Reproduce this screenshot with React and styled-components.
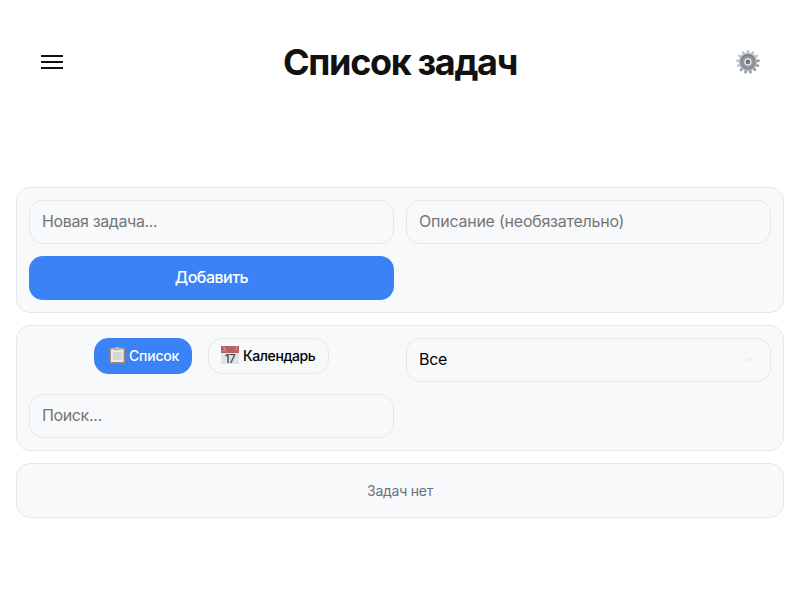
import React from "react";
import styled, { createGlobalStyle } from "styled-components";

const GlobalStyle = createGlobalStyle`
  * { box-sizing: border-box; }
  body {
    margin: 0;
    background: #fff;
    color: #111;
    font-family: Inter, "Liberation Sans", sans-serif;
    font-size: 16px;
    -webkit-font-smoothing: antialiased;
  }
`;

const Page = styled.main`
  min-height: 600px;
  padding: 0 16px;
`;

const Header = styled.header`
  display: grid;
  grid-template-columns: 48px 1fr 48px;
  align-items: center;
  height: 124px;
  padding: 0 12px;
  margin-bottom: 63px;
`;

const Title = styled.h1`
  margin: 0;
  text-align: center;
  font-size: 36px;
  line-height: 44px;
  font-weight: 700;
  letter-spacing: -1.35px;
`;

const IconButton = styled.button`
  display: flex;
  align-items: center;
  width: 48px;
  height: 48px;
  padding: 0 0 0 ${(p) => p.$inset};
  border: 0;
  background: none;
`;

const Stack = styled.div`
  display: flex;
  flex-direction: column;
  gap: 12px;
`;

const Panel = styled.section`
  border: 1px solid #e5e7eb;
  border-radius: 14px;
  background: #f8f9fb;
`;

const GridPanel = styled(Panel)`
  display: grid;
  grid-template-columns: 1fr 1fr;
  gap: 12px;
  padding: 12px;
`;

const Field = styled.input`
  width: 100%;
  height: 44px;
  padding: 0 12px 2px;
  border: 1px solid #e5e7eb;
  border-radius: 14px;
  background: #f8f9fb;
  color: #111;
  font: inherit;
  letter-spacing: ${(p) => p.$spacing || "-0.37px"};
  outline: none;
  &::placeholder { color: #757575; opacity: 1; }
`;

const AddButton = styled.button`
  height: 44px;
  padding: 0 0 2px;
  border: 0;
  border-radius: 14px;
  background: #3b82f6;
  color: #fff;
  font: inherit;
  font-weight: 500;
  letter-spacing: -0.5px;
`;

const Tabs = styled.div`
  display: flex;
  justify-content: center;
  align-items: flex-start;
  gap: 16px;
`;

const Tab = styled.button`
  display: flex;
  align-items: center;
  gap: 3px;
  width: ${(p) => p.$width};
  height: 36px;
  padding: 0 0 2px ${(p) => (p.$active ? "14px" : "12px")};
  border: 1px solid ${(p) => (p.$active ? "#3b82f6" : "#e5e7eb")};
  border-radius: 14px;
  background: ${(p) => (p.$active ? "#3b82f6" : "#f8f9fb")};
  color: ${(p) => (p.$active ? "#fff" : "#000")};
  font: inherit;
  font-size: 14px;
  font-weight: 500;
  letter-spacing: ${(p) => (p.$active ? "-0.2px" : "-0.4px")};
  white-space: nowrap;
  svg { flex: none; }
`;

const Select = styled.div`
  display: flex;
  align-items: center;
  justify-content: space-between;
  height: 44px;
  padding: 0 17px 2px 12px;
  border: 1px solid #e5e7eb;
  border-radius: 14px;
  color: #000;
  letter-spacing: -0.3px;
  svg { margin-top: 2px; }
`;

const Empty = styled(Panel)`
  display: flex;
  align-items: center;
  justify-content: center;
  height: 55px;
  color: #6b7280;
  font-size: 14px;
  letter-spacing: -0.25px;
`;

const MenuIcon = () => (
  <svg width="22" height="16" viewBox="0 0 22 16" fill="#111">
    <path d="M0 1h22v2H0zM0 7h22v2H0zM0 13h22v2H0z" />
  </svg>
);

const TEETH = Array.from({ length: 13 }, (_, i) => (i * 360) / 13);

const GearIcon = () => (
  <svg width="24" height="26" viewBox="0 -1 24 26">
    {TEETH.map((angle) => (
      <path
        key={angle}
        d="M10.6 4 10.9 .5Q12-.3 13.1 .5L13.4 4Z"
        fill={angle > 60 && angle < 230 ? "#8f969d" : "#b9c4cd"}
        transform={`rotate(${angle} 12 12)`}
      />
    ))}
    <circle cx="12" cy="12" r="9.2" fill="#b3bac1" />
    <circle cx="12" cy="12" r="7.8" fill="#8b9095" />
    <path d="M5 10.5a7.2 7.2 0 0 1 13.5-1.5" fill="none" stroke="#70767c" />
    <circle cx="12" cy="12" r="5.6" fill="#92989f" />
    <circle cx="12" cy="12" r="3.7" fill="#dfe5ea" />
    <circle cx="12" cy="12" r="2.2" fill="#555b62" />
    <circle cx="12.4" cy="12.5" r="1" fill="#a8afb5" />
  </svg>
);

const ClipboardIcon = () => (
  <svg width="17" height="18" viewBox="0 0 17 18">
    <rect x=".5" y="1.5" width="15.5" height="16" rx="1" fill="#a28b73" />
    <rect x="2" y="3" width="12.5" height="13" fill="#ececeb" />
    <path d="M3.8 6h9v8h-9z" fill="#d5d6d8" />
    <path d="M4 3.7V2h2.7Q8.3-.4 10 2h2.5v1.7z" fill="#b3bdc6" />
    <path d="M4 3.7h8.5" stroke="#87919b" strokeWidth=".6" />
  </svg>
);

const CalendarIcon = () => (
  <svg width="19" height="18" viewBox="0 0 19 18">
    <path d="M0 6h18v12H0z" fill="#e2e3e4" />
    <path d="M0 0h18v7H0z" fill="#b86164" />
    <path d="M2 5.5 4 2.5l1 3M15 2.5v2" stroke="#dfb0b2" strokeWidth=".8" fill="none" />
    <circle cx="3" cy="1" r=".6" fill="#eee" />
    <circle cx="15.5" cy="1" r=".6" fill="#eee" />
    <text x="8.8" y="16.5" textAnchor="middle" fontSize="11.5" fontWeight="500" letterSpacing="-.5" fill="#414345">17</text>
  </svg>
);

const Chevron = () => (
  <svg width="8" height="6" viewBox="0 0 8 6" fill="none" stroke="#e5e7eb" strokeWidth="1.2">
    <path d="m1 1 3 3 3-3" />
  </svg>
);

export default function App() {
  return (
    <>
      <GlobalStyle />
      <Page>
        <Header>
          <IconButton $inset="13px" aria-label="Меню"><MenuIcon /></IconButton>
          <Title>Список задач</Title>
          <IconButton $inset="12px" aria-label="Настройки"><GearIcon /></IconButton>
        </Header>
        <Stack>
          <GridPanel>
            <Field placeholder="Новая задача..." />
            <Field placeholder="Описание (необязательно)" $spacing="-0.24px" />
            <AddButton>Добавить</AddButton>
          </GridPanel>
          <GridPanel>
            <Tabs>
              <Tab $active $width="98px"><ClipboardIcon />Список</Tab>
              <Tab $width="121px"><CalendarIcon />Календарь</Tab>
            </Tabs>
            <Select>Все<Chevron /></Select>
            <Field placeholder="Поиск..." />
          </GridPanel>
          <Empty>Задач нет</Empty>
        </Stack>
      </Page>
    </>
  );
}
